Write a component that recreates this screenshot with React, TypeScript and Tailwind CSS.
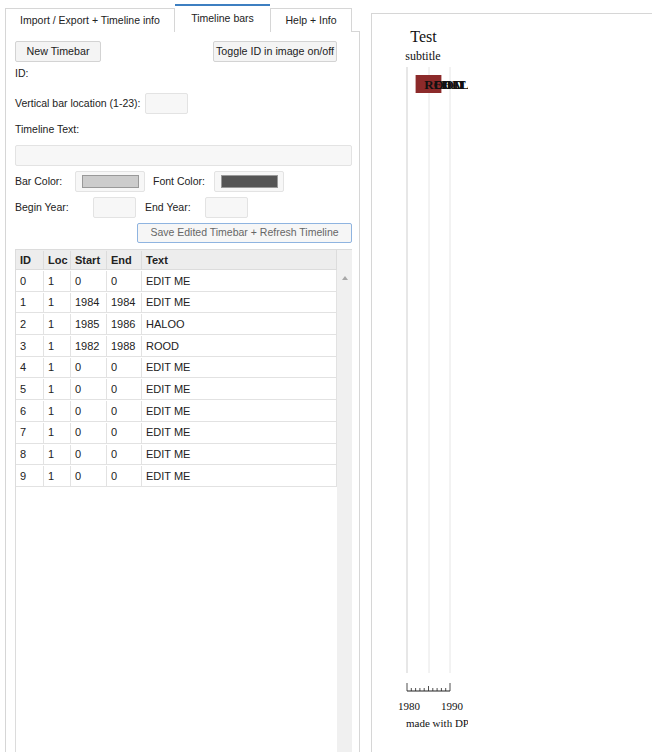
const rows = [
  { id: 0, loc: 1, start: 0, end: 0, text: 'EDIT ME' },
  { id: 1, loc: 1, start: 1984, end: 1984, text: 'EDIT ME' },
  { id: 2, loc: 1, start: 1985, end: 1986, text: 'HALOO' },
  { id: 3, loc: 1, start: 1982, end: 1988, text: 'ROOD' },
  { id: 4, loc: 1, start: 0, end: 0, text: 'EDIT ME' },
  { id: 5, loc: 1, start: 0, end: 0, text: 'EDIT ME' },
  { id: 6, loc: 1, start: 0, end: 0, text: 'EDIT ME' },
  { id: 7, loc: 1, start: 0, end: 0, text: 'EDIT ME' },
  { id: 8, loc: 1, start: 0, end: 0, text: 'EDIT ME' },
  { id: 9, loc: 1, start: 0, end: 0, text: 'EDIT ME' },
]

const cols = [
  { key: 'id', label: 'ID', w: 'w-[28px]' },
  { key: 'loc', label: 'Loc', w: 'w-[27px]' },
  { key: 'start', label: 'Start', w: 'w-[36px]' },
  { key: 'end', label: 'End', w: 'w-[35px]' },
  { key: 'text', label: 'Text', w: 'flex-1' },
] as const

function Input({ w }: { w: string }) {
  return <div className={`${w} h-[21px] shrink-0 rounded-[2px] border border-[#e3e3e3] bg-[#f7f7f7]`} />
}

function ColorBox({ color }: { color: string }) {
  return (
    <div className="flex h-[21px] w-[70px] shrink-0 items-center justify-center rounded-[2px] border border-[#e3e3e3] bg-[#f7f7f7]">
      <div className={`h-[13px] w-[57px] border border-[#999] ${color}`} />
    </div>
  )
}

function Btn({ children, className = '' }: { children: React.ReactNode; className?: string }) {
  return (
    <div
      className={`flex h-[21px] items-center justify-center whitespace-nowrap rounded-[2px] border border-[#d3d3d3] bg-[#f4f4f4] text-[10.7px] text-[#222] ${className}`}
    >
      {children}
    </div>
  )
}

function LeftPanel() {
  return (
    <div className="ml-[5px] mt-[4px] flex w-[355px] shrink-0 flex-col whitespace-nowrap text-[10.5px]">
      <div className="flex h-[28px] items-end">
        <div className="flex h-[24px] w-[170px] items-center justify-center border border-b-0 border-[#d6d6d6] bg-white pt-[1px]">
          Import / Export + Timeline info
        </div>
        <div className="flex h-[28px] w-[95px] items-start justify-center border-t-2 border-[#3d7fc1] bg-white pt-[5px]">
          Timeline bars
        </div>
        <div className="flex h-[24px] w-[82px] items-center justify-center border border-b-0 border-[#d6d6d6] bg-white pt-[1px]">
          Help + Info
        </div>
        <div className="h-px flex-1 bg-[#d6d6d6]" />
      </div>

      <div className="flex h-[720px] flex-col border-x border-[#d6d6d6] pl-[9px] pr-[7px]">
        <div className="mt-[9px] flex justify-between pr-[15px]">
          <Btn className="w-[86px]">New Timebar</Btn>
          <Btn className="w-[124px]">Toggle ID in image on/off</Btn>
        </div>
        <div className="mt-[5px] h-[13px] leading-[13px]">ID:</div>
        <div className="mt-[13px] flex items-center">
          <div className="w-[130px] shrink-0">Vertical bar location (1-23):</div>
          <Input w="w-[43px]" />
        </div>
        <div className="mt-[9px] h-[13px] leading-[13px]">Timeline Text:</div>
        <div className="mt-[9px]">
          <Input w="w-full" />
        </div>
        <div className="mt-[5px] flex items-center">
          <div className="w-[60px] shrink-0">Bar Color:</div>
          <ColorBox color="bg-[#cccccc]" />
          <div className="ml-[8px] w-[61px] shrink-0">Font Color:</div>
          <ColorBox color="bg-[#555555]" />
        </div>
        <div className="mt-[5px] flex items-center">
          <div className="w-[78px] shrink-0">Begin Year:</div>
          <Input w="w-[43px]" />
          <div className="ml-[9px] w-[60px] shrink-0">End Year:</div>
          <Input w="w-[43px]" />
        </div>
        <div className="mt-[5px] flex justify-end">
          <div className="flex h-[20px] w-[215px] items-center justify-center rounded-[2px] border border-[#8fb4e0] bg-[#f6f6f6] text-[#666]">
            Save Edited Timebar + Refresh Timeline
          </div>
        </div>

        <div className="mt-[6px] flex flex-1 border-l border-[#dcdcdc] text-[11px]">
          <div className="flex flex-1 flex-col bg-white">
            <div className="flex h-[21px] items-center border-y border-r border-[#dcdcdc] bg-[#ededed] pt-px font-bold">
              {cols.map((c, i) => (
                <div
                  key={c.key}
                  className={`${c.w} flex h-full items-center pl-[4px] ${i < cols.length - 1 ? 'border-r border-[#dcdcdc]' : ''}`}
                >
                  {c.label}
                </div>
              ))}
            </div>
            {rows.map((r) => (
              <div key={r.id} className="flex h-[21.7px] items-center border-b border-r border-[#e2e2e2] pt-px">
                {cols.map((c, i) => (
                  <div
                    key={c.key}
                    className={`${c.w} flex h-full items-center pl-[4px] ${i < cols.length - 1 ? 'border-r border-[#e2e2e2]' : ''}`}
                  >
                    {r[c.key]}
                  </div>
                ))}
              </div>
            ))}
          </div>
          <div className="flex w-[15px] flex-col items-center border-t border-[#dcdcdc] bg-[#f0f0f0] pt-[26px]">
            <div className="h-0 w-0 border-x-[3.5px] border-b-[4px] border-x-transparent border-b-[#a8a8a8]" />
          </div>
        </div>
      </div>
    </div>
  )
}

function Timeline() {
  // 1980 sits at x=35, 1990 at x=78 (svg coords)
  const x = (y: number) => 35 + (y - 1980) * 4.3
  const ticks = Array.from({ length: 11 }, (_, i) => x(1980 + i))
  return (
    <svg width="96" height="740" className="block" style={{ fontFamily: '"Liberation Serif", serif' }}>
      <text x="51.5" y="28" fontSize="16" textAnchor="middle" fill="#111">
        Test
      </text>
      <text x="51" y="46" fontSize="12" textAnchor="middle" fill="#111">
        subtitle
      </text>
      <line x1="35" y1="53" x2="35" y2="659" stroke="#cfcfcf" />
      <line x1="57" y1="53" x2="57" y2="659" stroke="#e6e6e6" />
      <line x1="78" y1="53" x2="78" y2="659" stroke="#e6e6e6" />
      <rect x={x(1982)} y="61" width={x(1988) - x(1982)} height="18" fill="#8c2a2a" />
      <g fontSize="13" fontWeight="bold" fill="#111">
        <text x={x(1984)} y="75">
          ROOD
        </text>
        <text x={x(1986) + 1} y="75">
          EDIT ME
        </text>
        <text x={x(1987) + 4} y="75">
          HALOO
        </text>
      </g>
      <line x1="35" y1="677" x2="78" y2="677" stroke="#222" />
      {ticks.map((m, i) => (
        <line
          key={i}
          x1={m}
          y1={i === 0 || i === 10 ? 669 : i === 5 ? 672 : 674}
          x2={m}
          y2="677"
          stroke="#222"
          strokeWidth="0.8"
        />
      ))}
      <text x="26" y="696" fontSize="11" fill="#111">
        1980
      </text>
      <text x="69" y="696" fontSize="11" fill="#111">
        1990
      </text>
      <text x="34" y="713" fontSize="11" fill="#111">
        made with DPL
      </text>
    </svg>
  )
}

export default function App() {
  return (
    <div
      className="flex h-[752px] w-[652px] overflow-hidden bg-white text-[11px] text-[#222]"
      style={{ fontFamily: '"Liberation Sans", Arial, sans-serif' }}
    >
      <LeftPanel />
      <div className="ml-[11px] mt-[13px] w-[400px] shrink-0 border-l border-t border-[#d6d6d6]">
        <Timeline />
      </div>
    </div>
  )
}
